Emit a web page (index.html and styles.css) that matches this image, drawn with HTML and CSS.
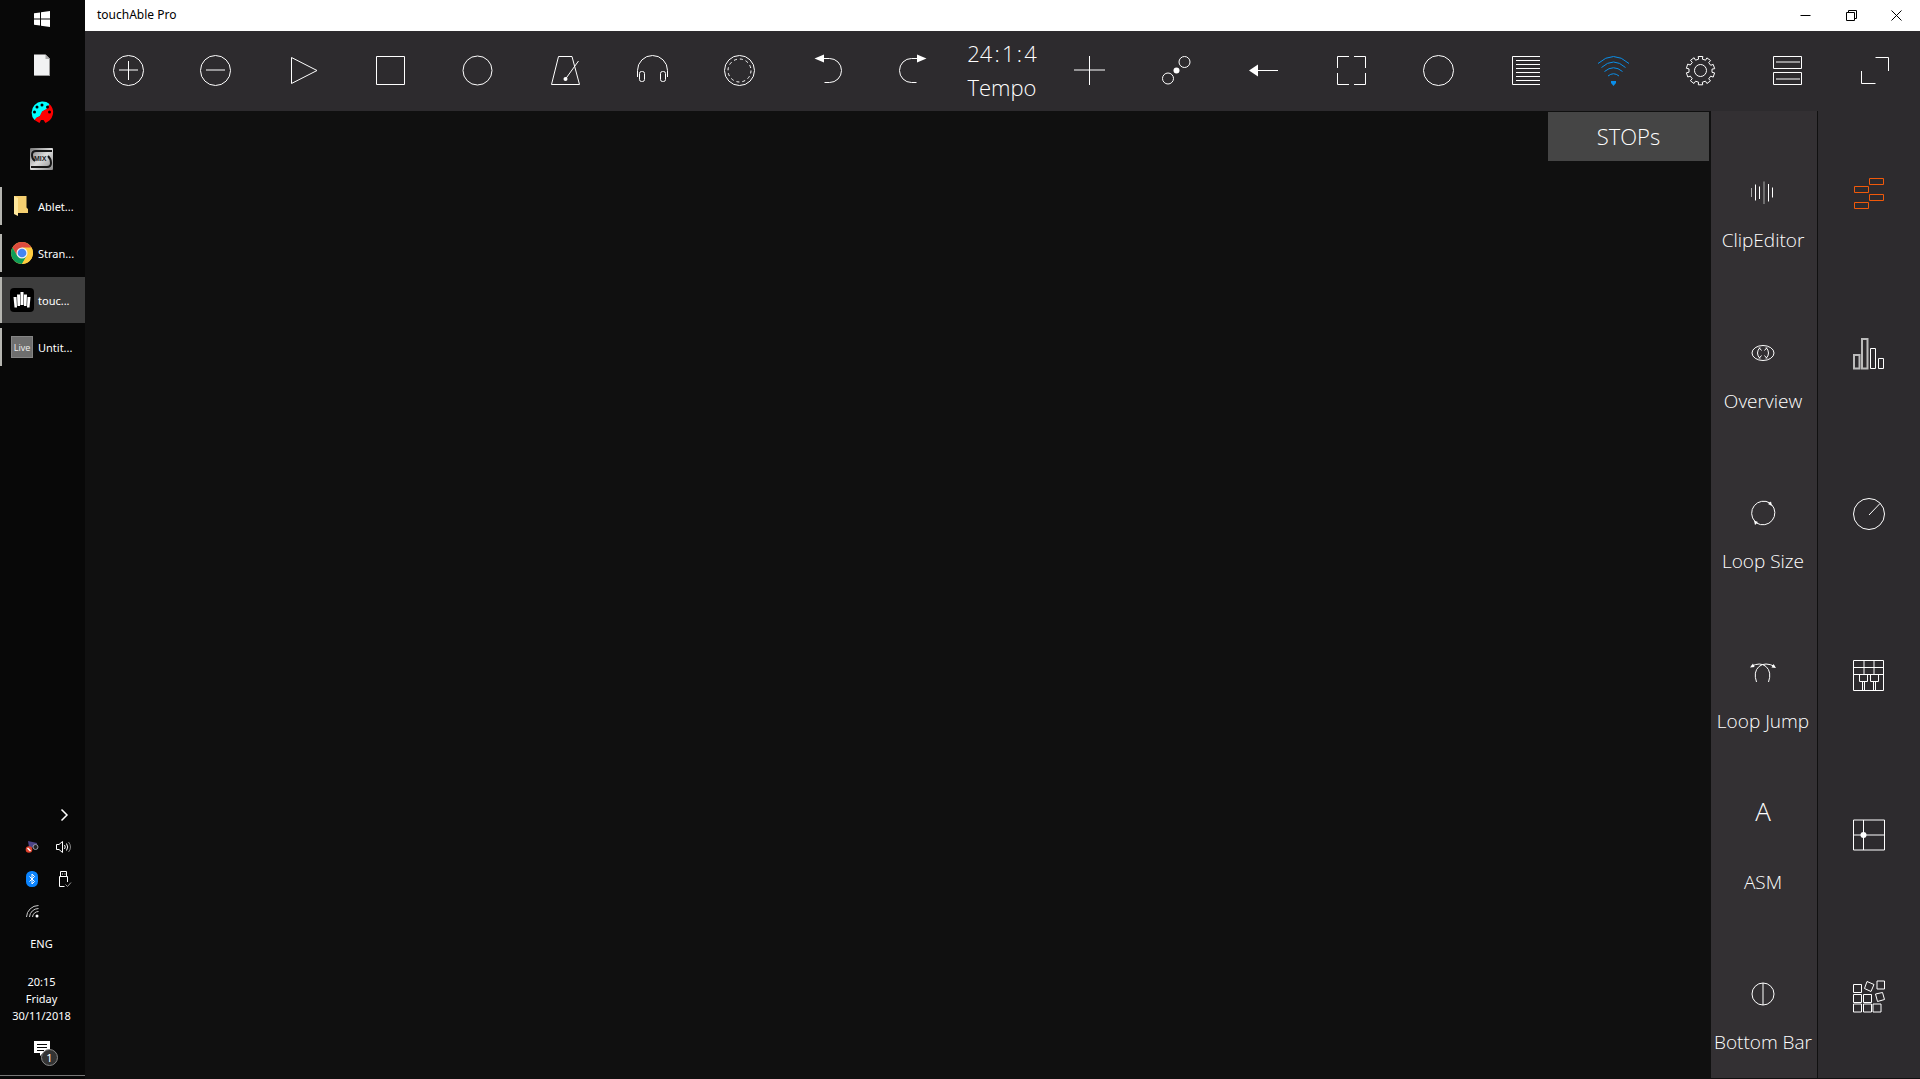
FILE: index.html
```html
<!DOCTYPE html>
<html lang="en">
<head>
	<meta charset="utf-8">
	<title>touchAble Pro</title>
	<link rel="stylesheet" href="styles.css">
</head>
<body>
	<!-- windows taskbar -->
	<aside class="taskbar">
		<button class="start" aria-label="Start">
			<svg width="16" height="16" viewBox="0 0 16 16"><path fill="#fff" d="M0 2.2 6 1.4V7.5H0zM7 1.2 16 0V7.5H7zM0 8.5H6V14.6L0 13.8zM7 8.5H16V16L7 14.8z"/></svg>
		</button>
		<button class="pin" aria-label="File">
			<svg width="16" height="22" viewBox="0 0 16 22"><path fill="#f1f2f3" d="M0 .5H11.500L16 5V21.500H0z"/><path fill="#aaa" d="M11.500 .5V5H16z"/><path fill="none" stroke="#999" d="M.5 21.500H15.500V5"/></svg>
		</button>
		<button class="pin" aria-label="Palette">
			<svg width="22" height="22" viewBox="0 0 22 22">
				<path fill="#0ff" d="M3.500 19A11 11 0 0 1 18.500 3L16 8 11.500 10.500 9.500 15 7 16z"/>
				<path fill="#f00" d="M18.500 3A11 11 0 0 1 17 20.500L14.500 22 12.500 19H10L8.500 22 3.500 19 5.500 16.500 8.500 15.500 11 10.500 15.500 8z"/>
				<g fill="#000"><circle cx="3.500" cy="11" r="1.500"/><circle cx="6" cy="6" r="1.500"/><circle cx="11" cy="4" r="1.500"/><circle cx="16.500" cy="6" r="1.500"/><circle cx="18.500" cy="11" r="1.500"/></g>
			</svg>
		</button>
		<button class="pin" aria-label="S MIX">
			<svg width="23" height="22" viewBox="0 0 23 22">
				<defs><linearGradient id="metal" x1="0" y1="0" x2="1" y2="1"><stop offset="0" stop-color="#777"/><stop offset=".5" stop-color="#ddd"/><stop offset="1" stop-color="#888"/></linearGradient></defs>
				<rect width="23" height="22" rx="1" fill="url(#metal)"/>
				<path fill="none" stroke="#161616" stroke-width="2" d="M22 3H6Q2 3 2 7T5 13M18 8Q21 11 21 15T17 19H1"/>
				<text class="mix" x="4" y="13">MIX</text>
			</svg>
		</button>
		<button class="task">
			<svg viewBox="0 0 22 24"><path fill="#f5cf70" d="M3 2H15.500V13.500L17 15V19H3z"/><path fill="#ffe79b" d="M3 2 7 4V22L3 20z"/></svg>
			<span>Ablet...</span>
		</button>
		<button class="task">
			<svg viewBox="0 0 22 24">
				<circle cx="11" cy="12" r="11" fill="#ffcd40"/>
				<path fill="#dd4b3e" d="M1.500 6.500A11 11 0 0 1 20.500 6.500H11L6.200 14.800z"/>
				<path fill="#0f9d58" d="M1.500 6.500 6.200 14.800 15.800 14.800 11 23A11 11 0 0 1 1.500 6.500z"/>
				<path fill="#ffcd40" d="M20.500 6.500A11 11 0 0 1 11 23L15.800 14.800 15 8z"/>
				<circle cx="11" cy="12" r="5.500" fill="#f1f1f1"/><circle cx="11" cy="12" r="4.300" fill="#4285f4"/>
			</svg>
			<span>Stran...</span>
		</button>
		<button class="task active">
			<svg viewBox="0 0 24 24"><rect width="24" height="24" rx="4" fill="#000"/><path fill="#fff" d="M3.500 9H6.500L7 19.500H4.500zM7 6.500H10V18H7.500zM10.500 4H13.500V17H10.500zM14 6.500H17L16.500 18H14zM17.500 9H20.500L19.500 19.500H17z"/></svg>
			<span>touc...</span>
		</button>
		<button class="task">
			<svg viewBox="0 0 22 24"><rect x=".5" y="1.500" width="21" height="21" fill="#6e6e6e" stroke="#858585"/><text class="live" x="11" y="16">Live</text></svg>
			<span>Untit...</span>
		</button>

		<div class="tray">
			<div class="tray-icons">
				<button class="second" aria-label="Show hidden icons"><svg width="16" height="16" viewBox="0 0 16 16" class="line"><path stroke-width="1.500" d="M5.500 2.500 11 8 5.500 13.500"/></svg></button>
				<button aria-label="Camera"><svg width="14" height="14" viewBox="0 0 14 14"><path fill="#4c4488" d="M3 1 12 3 11 8 4 7z"/><circle cx="10.500" cy="7" r="2.500" fill="#222" stroke="#99a"/><circle cx="4" cy="9.500" r="3.300" fill="#e0412c"/><path stroke="#fff" stroke-width="1.400" d="M2.500 8 5.500 11"/></svg></button>
				<button aria-label="Volume"><svg width="18" height="16" viewBox="0 0 18 16" class="line"><path d="M1.500 5.500H4L7.500 2.500V13.500L4 10.500H1.500zM9.500 6Q11 8 9.500 10M11.500 4.500Q14 8 11.500 11.500"/><path opacity=".5" d="M13.500 3Q17.500 8 13.500 13"/></svg></button>
				<button aria-label="Bluetooth"><svg width="12" height="16" viewBox="0 0 12 16"><rect width="12" height="16" rx="5.500" fill="#0a84ff"/><path fill="none" stroke="#fff" d="M3.500 5.500 8.500 10.500 6 13V3L8.500 5.500 3.500 10.500"/></svg></button>
				<button aria-label="Eject device"><svg width="14" height="18" viewBox="0 0 14 18" class="line"><path d="M3.500 6.500V1.500H9.500V6.500M2.500 16.500V6.500H10.500V12M2.500 16.500H7.500M5 4H6M7.500 4H8.500"/><path stroke="#999" d="M8.500 14.500 10.500 16.500 14 12.500"/></svg></button>
				<button aria-label="Network"><svg width="12" height="14" viewBox="0 0 12 14" class="line"><path stroke="#ccc" d="M.5 13A12 12 0 0 1 12.500 1.500M3.500 13A9 9 0 0 1 12.500 4.500M6.500 13A6 6 0 0 1 12.500 7.500"/><circle cx="11" cy="12" r="1.500" fill="#fff" stroke="none"/></svg></button>
			</div>
			<button class="lang">ENG</button>
			<button class="clock">20:15<br>Friday<br>30/11/2018</button>
			<button class="notify" aria-label="Notifications">
				<svg width="16" height="16" viewBox="0 0 16 16"><path fill="#fff" d="M0 0H16V12H9L6 15V12H0z"/><path stroke="#080808" d="M3 3.500H13M3 6.500H13M3 9.500H10"/></svg>
				<span class="badge">1</span>
			</button>
		</div>
	</aside>

	<div class="window">
		<header class="titlebar">
			<h1>touchAble Pro</h1>
			<button aria-label="Minimize"><svg width="11" height="11" viewBox="0 0 11 11"><path d="M.5 5.500H10.500"/></svg></button>
			<button aria-label="Restore"><svg width="11" height="11" viewBox="0 0 11 11"><path d="M.5 2.500H8.500V10.500H.5zM2.500 2.500V.5H10.500V8.500H8.500"/></svg></button>
			<button aria-label="Close"><svg width="11" height="11" viewBox="0 0 11 11"><path d="M.5 .5 10.500 10.500M10.500 .5 .5 10.500"/></svg></button>
		</header>

		<nav class="toolbar">
			<button aria-label="Add"><svg viewBox="0 0 31 31"><circle cx="15.500" cy="15.500" r="15"/><path d="M15.500 6V25"/><path class="soft" d="M6 15H25"/></svg></button>
			<button aria-label="Remove"><svg viewBox="0 0 31 31"><circle cx="15.500" cy="15.500" r="15"/><path class="soft" d="M6 15H25"/></svg></button>
			<button aria-label="Play"><svg viewBox="0 0 31 31"><path d="M3.500 2.500 29 15.500 3.500 28.500z"/></svg></button>
			<button aria-label="Stop"><svg viewBox="0 0 31 31"><path d="M1.500 1.500H29.500V29.500H1.500z"/></svg></button>
			<button aria-label="Record"><svg viewBox="0 0 31 31"><circle cx="15.500" cy="15.500" r="14.500"/></svg></button>
			<button aria-label="Metronome"><svg viewBox="0 0 31 31"><path d="M1.500 29.500 8.500 1.500H22L29.500 29.500zM15.500 24 28.500 6"/><circle class="fill" cx="15.500" cy="24" r="2"/></svg></button>
			<button aria-label="Cue"><svg viewBox="0 0 31 31"><path d="M.5 22V15.500A15 15 0 0 1 30.500 15.500V22"/><rect x="2.500" y="16.500" width="5" height="10" rx="2"/><rect x="23.500" y="16.500" width="5" height="10" rx="2"/></svg></button>
			<button aria-label="Overdub"><svg viewBox="0 0 31 31"><circle cx="15.500" cy="15.500" r="15"/><circle cx="15.500" cy="15.500" r="11.500" stroke-dasharray="3 3.020"/></svg></button>
			<button aria-label="Undo"><svg viewBox="0 0 31 31"><path d="M12 3.500H17.500A12 12 0 0 1 17.500 27.500H12.500"/><path class="fill" d="M2.500 3.500 12 -.5V7.500z"/></svg></button>
			<button aria-label="Redo"><svg viewBox="0 0 31 31"><path d="M18 3.500H12.500A12 12 0 0 0 12.500 27.500H17.500"/><path class="fill" d="M27.500 3.500 18 -.5V7.500z"/></svg></button>
			<button class="tempo"><span>24&#8202;:&#8202;1&#8202;:&#8202;4</span><span>Tempo</span></button>
			<button aria-label="New"><svg viewBox="0 0 31 31"><path d="M15.500 1V30"/><path class="soft" d="M0 15H31"/></svg></button>
			<button aria-label="Link"><svg viewBox="0 0 31 31"><circle cx="23.500" cy="7" r="5.500"/><circle cx="7" cy="23.500" r="5.500"/><circle class="fill" cx="15.500" cy="15.500" r="3"/></svg></button>
			<button aria-label="Back"><svg viewBox="0 0 31 31"><path d="M9 15.500H30"/><path class="fill" d="M1 15.500 10 9.500V21.500z"/></svg></button>
			<button aria-label="Fit"><svg viewBox="0 0 31 31"><path d="M1.500 13V1.500H13M18 1.500H29.500V13M29.500 18V29.500H18M13 29.500H1.500V18"/></svg></button>
			<button aria-label="Session record"><svg viewBox="0 0 31 31"><circle cx="15.500" cy="15.500" r="15"/></svg></button>
			<button aria-label="List"><svg viewBox="0 0 31 31"><path d="M30 1.500H2.500V29.500H30M6 5.500H30M6 9.500H30M6 13.500H30M6 17.500H30M6 21.500H30M6 25.500H30"/></svg></button>
			<button class="wifi" aria-label="Connection"><svg viewBox="0 0 31 31"><path d="M0 8.500Q15.500 -5.500 31 8.500M3.500 12.500Q15.500 1.500 27.500 12.500M6.500 16.500Q15.500 9 24.500 16.500M10 21Q15.500 16.500 21 21"/><path class="fill" d="M13 26H18V28L15.500 31 13 28z"/></svg></button>
			<button aria-label="Settings"><svg viewBox="0 0 31 31"><circle cx="15.500" cy="15.500" r="6"/><path stroke-linejoin="round" d="M13.600 4.200 13.200 1.500 17.800 1.500 17.400 4.200 20.600 5.200 21.900 2.900 25.600 5.500 23.700 7.600 25.700 10.300 28.200 9.400 29.700 13.700 27 14.100 27 17.300 29.600 17.900 28.200 22.100 25.700 21.100 23.700 23.800 25.500 25.900 21.900 28.500 20.500 26.200 17.300 27.200 17.700 29.800H13.300L13.600 27.200 10.500 26.200 9 28.500 5.400 25.800 7.200 23.700 5.300 21.100 2.800 22 1.400 17.800 4 17.200V13.900L1.400 13.300 2.700 9.100 5.300 10 7.300 7.400 5.500 5.300 9.100 2.700 10.500 5.200z"/></svg></button>
			<button aria-label="Rows"><svg viewBox="0 0 31 31"><path d="M1.500 1.500H29.500V13.500H1.500zM1.500 17.500H29.500V29.500H1.500z"/><path class="soft" d="M4 7H28M4 24H28"/></svg></button>
			<button aria-label="Expand"><svg viewBox="0 0 31 31"><path d="M15.500 2.500H28.500V16M1.500 16V28.500H15.500"/></svg></button>
		</nav>

		<div class="content">
			<main class="session"><button class="stops">STOPs</button></main>

			<nav class="modules">
				<button><svg viewBox="0 0 26 26"><path class="grey" d="M1.500 9V18M14 2.500V25"/><path d="M5.500 5.500V21.500M9.500 7.500V20M18.500 5V22.500M22.500 8.500V18.500"/></svg><span>ClipEditor</span></button>
				<button><svg viewBox="0 0 26 26"><ellipse cx="13" cy="13" rx="11" ry="7.500"/><path d="M10 7.500Q7.500 10 7.500 13T10 18.500M16 7.500Q18.500 10 18.500 13T16 18.500M9 7.500 11.500 10.500M17 7.500 14.500 10.500M9 18.500 11.500 15.500M17 18.500 14.500 15.500"/></svg><span>Overview</span></button>
				<button><svg viewBox="0 0 26 26"><path d="M5 21.500A12 12 0 0 1 20 3M21.500 4.500A12 12 0 0 1 6.500 23"/><path class="fill" d="M18 4 21 1.500 22 6zM8 22 5 25 4 20.500z"/></svg><span>Loop Size</span></button>
				<button><svg viewBox="0 0 26 26"><path d="M6.500 22Q3 12 9 6.500 15 1.500 25 6.500M18.500 22Q22 12 16 6.500 10 1.500 1 6.500"/><path class="fill" d="M0 7.500 3 3.500 4.500 7zM26 8 21.500 7.500 23.500 4z"/></svg><span>Loop Jump</span></button>
				<button><span class="letter">A</span><span>ASM</span></button>
				<button><svg viewBox="0 0 26 26"><circle cx="13" cy="13" r="11"/><path class="soft" d="M13 2V24"/></svg><span>Bottom Bar</span></button>
			</nav>

			<nav class="views">
				<button class="selected" aria-label="Clips"><svg viewBox="0 0 32 32"><path d="M16.500 1.500H30.500V7.500H16.500zM1.500 9.500H15.500V15.500H1.500zM16.500 17.500H30.500V23.500H16.500zM1.500 25.500H15.500V31.500H1.500z"/></svg></button>
				<button aria-label="Mixer"><svg viewBox="0 0 32 32"><path d="M17.500 10.500H22.500V30.500H17.500zM25.500 20.500H30.500V30.500H25.500z"/><path class="bars" d="M1 17H6.500V30.500H1zM9 1H14.500V30.500H9z"/></svg></button>
				<button aria-label="Devices"><svg viewBox="0 0 32 32"><circle cx="16" cy="16" r="15.500"/><path d="M16 17 27 5.500"/></svg></button>
				<button aria-label="Instruments"><svg viewBox="0 0 32 32"><path d="M.5 1.500H30.500V31.500H.5zM.5 8.500H30.500M.5 15.500H30.500M11 1.500V15.500M21 1.500V15.500M6.500 15.500H14.500V22.500H6.500zM17.500 15.500H25.500V22.500H17.500zM9.500 22.500V31.500M11.500 22.500V31.500M20.500 22.500V31.500M22.500 22.500V31.500"/></svg></button>
				<button aria-label="XY Pad"><svg viewBox="0 0 32 32"><path d="M.5 1H31.500V31H.5zM10.500 1V31M.5 16H31.500"/><circle class="fill" cx="10.500" cy="16" r="3"/></svg></button>
				<button aria-label="Templates"><svg viewBox="0 0 32 32"><path d="M.5 4.500H8.500V12.500H.5zM24 1H31.500V9H24zM.5 14.500H8.500V22.500H.5zM10.500 14.500H18.500V22.500H10.500zM.5 24H8.500V32H.5zM10.500 24H18.500V32H10.500zM20 24H28V32H20zM14 1.500 21 4.500 18 11.500 11.500 8.500zM22.500 14 29.500 12.500 31.500 19.500 24.500 21.500z"/></svg></button>
			</nav>
		</div>
	</div>
</body>
</html>
```

FILE: styles.css
```css
*{box-sizing: border-box;}
body{
	display: flex;
	min-height: 100vh;
	margin: 0;
	background: #080808;
	color: #fff;
	font: 300 19px/28px "Open Sans", sans-serif;
}
button{
	display: flex;
	align-items: center;
	justify-content: center;
	min-width: 0;
	padding: 0;
	border: 0;
	background: none;
	color: inherit;
	font: inherit;
	cursor: pointer;
}
svg{flex: none;display: block;overflow: visible;}

/* taskbar */
.taskbar{
	display: flex;
	flex: none;
	flex-direction: column;
	width: 85px;
	font: 400 11px/17px "Noto Sans", sans-serif;
}
.start,
.pin,
.lang,
.clock,
.notify{padding-right: 2px;}
.start{height: 38px;margin-bottom: 3px;}
.pin{height: 47px;}
.task{
	position: relative;
	justify-content: flex-start;
	gap: 4px;
	height: 46px;
	margin-top: 1px;
	padding-left: 10px;
}
.task svg{width: 24px;height: 24px;}
.task::before{
	content: "";
	position: absolute;
	top: 4px;
	bottom: 4px;
	left: 0;
	width: 2px;
	background: #b5b5b0;
}
.task.active{background: #3d3d3d;}
.task.active::before{top: 0;bottom: 0;}
.mix{font: 700 7px "Liberation Sans", sans-serif;fill: #222;}
.live{font: 400 9px "Open Sans", sans-serif;fill: #eee;text-anchor: middle;}
.line{fill: none;stroke: #fff;}

.tray{
	display: flex;
	flex-direction: column;
	margin-top: auto;
	margin-bottom: 3px;
	border-bottom: 1px solid #777;
}
.tray-icons{
	display: grid;
	grid-template-columns: 32px 32px;
	grid-auto-rows: 32px;
	margin-left: 16px;
}
.tray-icons .second{grid-column: 2;}
.lang{height: 32px;}
.clock{height: 64px;padding-top: 14px;}
.notify{position: relative;height: 52px;}
.badge{
	position: absolute;
	top: 26px;
	left: 41px;
	width: 17px;
	height: 17px;
	border: 1px solid #888;
	border-radius: 50%;
	background: #333;
	line-height: 15px;
}

/* app window */
.window{
	display: flex;
	flex: 1;
	flex-direction: column;
	min-width: 0;
	background: #101010;
}
.titlebar{
	display: flex;
	height: 31px;
	background: #fff;
	color: #000;
	font: 400 12px/30px "Noto Sans", sans-serif;
}
.titlebar h1{flex: 1;margin: 0 0 0 12px;font: inherit;}
.titlebar button{width: 46px;}
.titlebar svg{fill: none;stroke: #000;}
.titlebar button:last-child{padding-right: 1px;}

.toolbar{
	display: flex;
	height: 80px;
	padding: 0 1px 2px 0;
	background: #2d2b2e;
}
.toolbar button{flex: 1;}
.toolbar svg{width: 31px;height: 31px;}
.toolbar svg,
.modules svg,
.views svg{fill: none;stroke: #fff;}
.toolbar .soft,
.modules .soft{stroke: #fff;stroke-width: 2;opacity: .5;}
.toolbar .wifi svg{stroke: #0a8ee8;}
.toolbar .wifi .fill{fill: #0a8ee8;}
.fill{fill: #fff;stroke: none;}
.grey{stroke: #aaa;}
.bars{stroke: #bbb;stroke-width: 2;}
.toolbar .tempo{
	flex-direction: column;
	font-size: 22px;
	line-height: 34px;
	white-space: nowrap;
}

.content{display: flex;flex: 1;padding-bottom: 1px;}
.session{
	display: flex;
	flex: 1;
	align-items: flex-start;
	justify-content: flex-end;
	padding: 1px 2px;
}
.stops{
	width: 161px;
	height: 49px;
	padding-bottom: 2px;
	background: #454545;
	font-size: 22px;
}

.modules,
.views{display: flex;flex-direction: column;}
.modules{
	width: 107px;
	padding: 0 2px 5px 0;
	border-right: 1px solid #101010;
	background: #333033;
}
.modules button{
	flex: 1;
	flex-direction: column;
	justify-content: flex-end;
	gap: 21px;
	padding-bottom: 17px;
	white-space: nowrap;
}
.modules svg{width: 26px;height: 26px;}
.letter{height: 50px;font-size: 26px;}
.views{width: 102px;padding: 2px 0;background: #2d2b2e;}
.views button{flex: 1;}
.views svg{width: 32px;height: 32px;}
.views .selected svg{stroke: #f0590a;}
```
